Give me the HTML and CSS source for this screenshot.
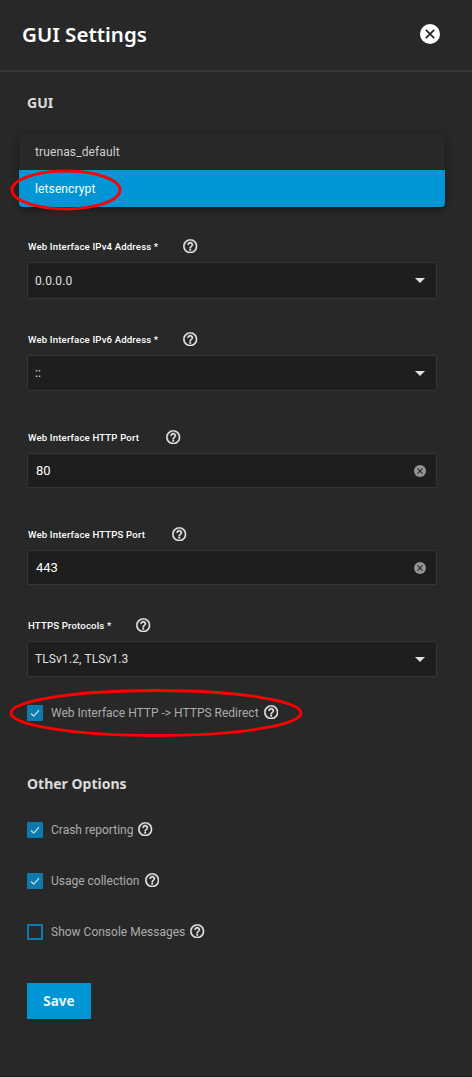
FILE: index.html
```html
<!DOCTYPE html>
<html lang="en">
<head>
<meta charset="utf-8">
<title>GUI Settings</title>
<link rel="stylesheet" href="styles.css">
</head>
<body>
<svg class="defs" width="0" height="0" aria-hidden="true">
  <symbol id="help" viewBox="1.700 1.700 20.600 20.600"><path d="M11 18h2v-2h-2v2zm1-16C6.480 2 2 6.480 2 12s4.480 10 10 10 10-4.480 10-10S17.520 2 12 2zm0 18c-4.410 0-8-3.590-8-8s3.590-8 8-8 8 3.590 8 8-3.590 8-8 8zm0-14c-2.210 0-4 1.790-4 4h2c0-1.100.9-2 2-2s2 .9 2 2c0 2-3 1.750-3 5h2c0-2.250 3-2.500 3-5 0-2.210-1.790-4-4-4z"/></symbol>
  <symbol id="close" viewBox="0 0 20 20"><circle cx="10" cy="10" r="10"/><path class="cross" d="M5.800 5.800l8.400 8.400M14.200 5.800l-8.400 8.400"/></symbol>
</svg>
<main class="panel">
  <header class="header">
    <h1 class="title">GUI Settings</h1>
    <svg class="close"><use href="#close"/></svg>
  </header>
  <form class="form">
    <h2 class="section section-gui">GUI</h2>
    <div class="menu">
      <div class="option">truenas_default</div>
      <div class="option selected">letsencrypt
        <svg class="mark mark-option" viewBox="0 0 114 44"><ellipse cx="57" cy="22" rx="54" ry="19"/></svg>
      </div>
    </div>
    <div class="field ipv4">
      <div class="label"><span class="label-text">Web Interface IPv4 Address *</span><svg class="help"><use href="#help"/></svg></div>
      <div class="control"><span>0.0.0.0</span><i class="arrow"></i></div>
    </div>
    <div class="field ipv6">
      <div class="label"><span class="label-text">Web Interface IPv6 Address *</span><svg class="help"><use href="#help"/></svg></div>
      <div class="control"><span>::</span><i class="arrow"></i></div>
    </div>
    <div class="field http">
      <div class="label"><span class="label-text">Web Interface HTTP Port</span><svg class="help"><use href="#help"/></svg></div>
      <div class="control input"><span>80</span><svg class="clear"><use href="#close"/></svg></div>
    </div>
    <div class="field https">
      <div class="label"><span class="label-text">Web Interface HTTPS Port</span><svg class="help"><use href="#help"/></svg></div>
      <div class="control input"><span>443</span><svg class="clear"><use href="#close"/></svg></div>
    </div>
    <div class="field protocols">
      <div class="label"><span class="label-text">HTTPS Protocols *</span><svg class="help"><use href="#help"/></svg></div>
      <div class="control"><span>TLSv1.2, TLSv1.3</span><i class="arrow"></i></div>
    </div>
    <div class="check redirect">
      <span class="box checked"><svg viewBox="0 0 16 16"><path d="M4 8.500l2.800 2.600L12 5.200"/></svg></span>
      <span class="check-text">Web Interface HTTP -&gt; HTTPS Redirect</span>
      <svg class="help"><use href="#help"/></svg>
      <svg class="mark mark-redirect" viewBox="0 0 296 50"><ellipse cx="148" cy="25" rx="145" ry="22.500"/></svg>
    </div>
    <h2 class="section section-other">Other Options</h2>
    <div class="checks">
      <div class="check">
        <span class="box checked"><svg viewBox="0 0 16 16"><path d="M4 8.500l2.800 2.600L12 5.200"/></svg></span>
        <span class="check-text">Crash reporting</span><svg class="help"><use href="#help"/></svg>
      </div>
      <div class="check">
        <span class="box checked"><svg viewBox="0 0 16 16"><path d="M4 8.500l2.800 2.600L12 5.200"/></svg></span>
        <span class="check-text">Usage collection</span><svg class="help"><use href="#help"/></svg>
      </div>
      <div class="check">
        <span class="box"></span>
        <span class="check-text">Show Console Messages</span><svg class="help"><use href="#help"/></svg>
      </div>
    </div>
    <button class="save" type="button">Save</button>
  </form>
</main>
</body>
</html>
```
FILE: styles.css
```css
* { box-sizing: border-box; }
body {
  margin: 0;
  background: #282828;
  color: #e0e0e0;
  font-family: Roboto, "Liberation Sans", sans-serif;
  font-size: 12px;
}
.defs { position: absolute; }
svg { display: block; flex: none; fill: currentColor; }
.cross { fill: none; stroke: #222; stroke-width: 1.700; }
.panel { height: 1077px; border-bottom: 1px solid #1b1b1b; overflow: hidden; }
.header {
  height: 72px;
  padding: 0 32px 3px 22px;
  border-bottom: 2px solid #353535;
  display: flex;
  align-items: center;
  justify-content: space-between;
}
.title {
  margin: 0;
  font: 600 20.500px/28px "Noto Sans", sans-serif;
  letter-spacing: 0;
  color: #fff;
}
.close { width: 20px; height: 20px; color: #fff; }
.form { padding: 21px 27px 0; }
.section {
  margin: 0;
  font: 700 14px/20px "Noto Sans", sans-serif;
  color: #dcdcdc;
}
.menu {
  margin: 20px 0 0 -8px;
  width: 426px;
  border-radius: 4px;
  box-shadow: 0 2px 4px -1px rgba(0,0,0,.26), 0 4px 5px rgba(0,0,0,.14), 0 1px 8px rgba(0,0,0,.1);
}
.option {
  position: relative;
  height: 37px;
  padding-left: 16px;
  line-height: 39px;
  letter-spacing: 0.120px;
  color: #d0d0d0;
}
.option.selected {
  background: #0095d5;
  border-radius: 0 0 4px 4px;
  color: #fff;
}
.mark { position: absolute; fill: none; stroke: #f00; stroke-width: 2.800; }
.mark-option { left: -10px; top: -2px; width: 114px; height: 44px; }
.mark-redirect { left: -19px; top: -17px; width: 296px; height: 50px; }
.label {
  height: 16px;
  padding-left: 1px;
  display: flex;
  align-items: center;
  gap: 25px;
  color: #fff;
}
.label-text { padding-top: 2px; font-size: 9.600px; font-weight: 500; line-height: 16px; letter-spacing: 0.160px; white-space: nowrap; }
.help { width: 14.500px; height: 14.500px; color: #e8e8e8; stroke: currentColor; stroke-width: 0.500; }
.control {
  width: 410px;
  height: 36px;
  margin-top: 8px;
  padding: 0 11px 0 7px;
  border: 1px solid #353535;
  border-radius: 2px;
  background: #1e1e1e;
  display: flex;
  align-items: center;
  justify-content: space-between;
  letter-spacing: 0.120px;
}
.input { height: 35px; padding: 0 10px 0 8px; font-size: 13px; letter-spacing: 0; color: #fff; }
.arrow { border: 5px solid transparent; border-top-color: #e0e0e0; border-bottom: 0; }
.clear { width: 12px; height: 12px; color: #949494; }
.ipv4 { margin-top: 31px; }
.ipv4 .control { height: 37px; }
.ipv6 { margin-top: 32px; }
.http { margin-top: 38px; }
.https { margin-top: 38px; }
.https span { margin-bottom: 1px; }
.http .label, .https .label { gap: 27px; }
.https .label-text { margin-bottom: 0; }
.protocols { margin-top: 32px; }
.check { position: relative; height: 16px; display: flex; align-items: center; }
.redirect { margin-top: 28px; }
.box { flex: none; width: 16px; height: 16px; margin-right: 8px; border: 2px solid #0b7baf; border-radius: 1px; }
.checked { border: 0; background: #0b7baf; }
.box svg { width: 16px; height: 16px; fill: none; stroke: #c5d5dc; stroke-width: 1.300; }
.check-text { margin-right: 5px; line-height: 16px; white-space: nowrap; color: #acacac; }
.check .help { margin-top: -2px; }
.section-other { margin-top: 53px; }
.checks { display: grid; gap: 35px; margin-top: 28px; }
.save {
  display: block;
  width: 64px;
  height: 36px;
  margin-top: 43px;
  padding: 0;
  border: 0;
  background: #0095d5;
  color: #e8f4fa;
  font: 700 13.500px/36px "Noto Sans", sans-serif;
}
```
